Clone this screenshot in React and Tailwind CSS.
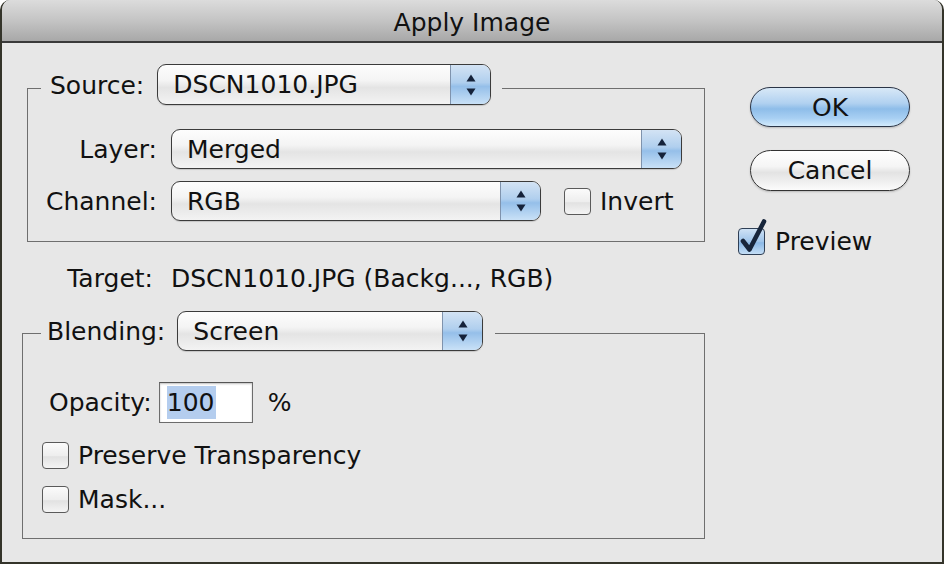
import React from "react";

const Arrows = () => (
  <svg width="10" height="22" viewBox="0 0 10 22">
    <path d="M5 0.5 L9.5 7.5 L0.5 7.5 Z" fill="#15223a" />
    <path d="M5 21.5 L9.5 14.5 L0.5 14.5 Z" fill="#15223a" />
  </svg>
);

const Popup = ({ value, className }) => (
  <div
    className={
      "flex overflow-hidden rounded-[9px] border border-[#3b3b3b] bg-[linear-gradient(to_bottom,#fdfdfd_0%,#f4f4f4_40%,#e4e4e4_58%,#f3f3f3_100%)] shadow-[0_1px_1px_rgba(0,0,0,0.15)] " +
      className
    }
  >
    <span className="flex flex-1 items-center pl-[15px] leading-none">{value}</span>
    <span className="flex w-[40px] items-center justify-center border-l border-[#7f93ad] bg-[linear-gradient(to_bottom,#d3e3f4_0%,#b0cfee_45%,#95bfe9_55%,#c9e1f7_100%)]">
      <Arrows />
    </span>
  </div>
);

const Checkbox = ({ checked }) => (
  <span className="relative inline-block h-[27px] w-[27px] shrink-0">
    <span
      className={
        checked
          ? "block h-full w-full rounded-[4px] border border-[#2f3f55] bg-[linear-gradient(to_bottom,#cfe2f5_0%,#9fc4ea_50%,#8bb8e6_55%,#c4def6_100%)]"
          : "block h-full w-full rounded-[4px] border border-[#5a5a5a] bg-[linear-gradient(to_bottom,#fbfbfb_0%,#eeeeee_50%,#e2e2e2_55%,#f4f4f4_100%)]"
      }
    />
    {checked && (
      <svg
        className="absolute left-0 top-[-8px] overflow-visible"
        width="32"
        height="36"
        viewBox="0 0 32 36"
      >
        <path
          d="M5 21 L11.5 29.5 L26 1.5"
          fill="none"
          stroke="#17253b"
          strokeWidth="4.6"
          strokeLinecap="round"
          strokeLinejoin="round"
        />
      </svg>
    )}
  </span>
);

const PillButton = ({ label, primary, className }) => (
  <button
    className={
      (primary
        ? "border-[#2a3446] bg-[linear-gradient(to_bottom,#d8e8f7_0%,#b1d1f0_40%,#8ebde9_55%,#a9d0f3_80%,#d3ebfc_100%)] "
        : "border-[#333333] bg-[linear-gradient(to_bottom,#ffffff_0%,#f5f5f5_40%,#e3e3e3_55%,#f0f0f0_80%,#fcfcfc_100%)] ") +
      "flex w-[160px] items-center justify-center rounded-full border leading-none text-[#111] shadow-[0_1px_2px_rgba(0,0,0,0.2)] " +
      className
    }
  >
    {label}
  </button>
);

export default function App() {
  return (
    <div className="flex h-[564px] w-[944px] flex-col overflow-hidden rounded-t-[10px] border-x-2 border-b-2 border-[#34342a] bg-[#e7e7e7] font-['DejaVu_Sans',sans-serif] text-[25px] text-[#111]">
      <div className="flex h-[43px] shrink-0 items-center justify-center border-b-2 border-[#3a3a3a] bg-[linear-gradient(to_bottom,#dcdcdc_0%,#c4c4c4_50%,#a8a8a8_100%)] pt-[3px] leading-none">
        Apply Image
      </div>

      <div className="flex pl-[20px]">
        <div className="w-[684px]">
          <fieldset className="ml-[5px] mt-[21px] w-[678px] border border-[#6f6f6f] pb-[20px]">
            <legend className="ml-[13px] pl-[9px] pr-[11px]">
              <div className="flex items-start pb-[7px]">
                <span className="flex h-[41px] items-center pt-[2px] leading-none">Source:</span>
                <Popup value="DSCN1010.JPG" className="ml-[13px] h-[41px] w-[334px]" />
              </div>
            </legend>
            <div className="mt-[17px] flex items-center">
              <span className="w-[129px] text-right leading-none">Layer:</span>
              <Popup value="Merged" className="ml-[14px] h-[40px] w-[511px]" />
            </div>
            <div className="mt-[12px] flex items-center">
              <span className="w-[129px] text-right leading-none">Channel:</span>
              <Popup value="RGB" className="ml-[14px] h-[40px] w-[370px]" />
              <span className="ml-[23px] flex">
                <Checkbox />
              </span>
              <span className="ml-[9px] leading-none">Invert</span>
            </div>
          </fieldset>

          <div className="mt-[22px] flex h-[28px] items-center leading-none">
            <span className="w-[131px] text-right">Target:</span>
            <span className="ml-[18px]">DSCN1010.JPG (Backg..., RGB)</span>
          </div>

          <fieldset className="mt-[19px] w-[683px] border border-[#6f6f6f] pb-[25px]">
            <legend className="ml-[18px] pl-[6px] pr-[12px]">
              <div className="flex items-start pb-[4px]">
                <span className="flex h-[40px] items-center leading-none">Blending:</span>
                <Popup value="Screen" className="ml-[12px] h-[40px] w-[306px]" />
              </div>
            </legend>
            <div className="mt-[27px] flex items-center">
              <span className="ml-[26px] leading-none">Opacity:</span>
              <div className="ml-[7px] flex h-[41px] w-[94px] items-center border border-[#6c6c6c] border-t-[#555] bg-white pl-[7px] shadow-[inset_0_1px_2px_rgba(0,0,0,0.25)]">
                <span className="bg-[#b4cdee] py-[4px] pr-[2px] leading-none">100</span>
              </div>
              <span className="ml-[15px] leading-none">%</span>
            </div>
            <div className="mt-[19px] flex items-center">
              <span className="ml-[19px] flex">
                <Checkbox />
              </span>
              <span className="ml-[9px] leading-none">Preserve Transparency</span>
            </div>
            <div className="mt-[17px] flex items-center">
              <span className="ml-[19px] flex">
                <Checkbox />
              </span>
              <span className="ml-[9px] leading-none">Mask...</span>
            </div>
          </fieldset>
        </div>

        <div className="ml-[32px] flex flex-col items-start">
          <PillButton label="OK" primary className="ml-[12px] mt-[44px] h-[40px]" />
          <PillButton label="Cancel" className="ml-[12px] mt-[23px] h-[41px]" />
          <div className="mt-[37px] flex items-center">
            <Checkbox checked />
            <span className="ml-[10px] leading-none">Preview</span>
          </div>
        </div>
      </div>
    </div>
  );
}
